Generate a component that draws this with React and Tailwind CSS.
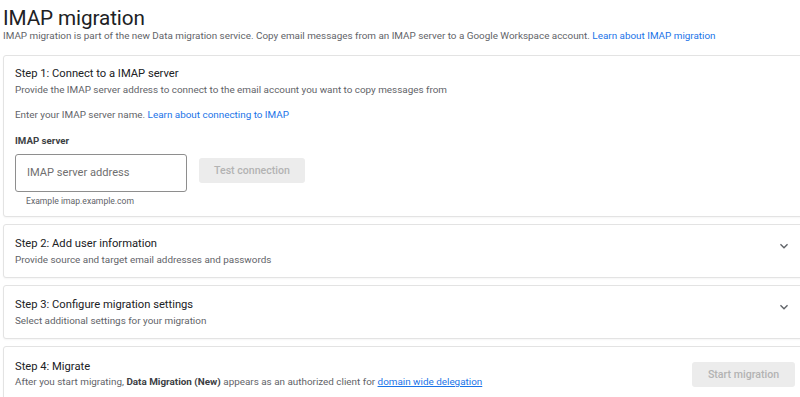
import React from "react";

function Chevron() {
  return (
    <svg width="16" height="16" viewBox="0 0 24 24" className="text-[#5f6368]">
      <path d="M7.41 8.59L12 13.17l4.59-4.58L18 10l-6 6-6-6 1.41-1.41z" fill="currentColor" />
    </svg>
  );
}

function Card({ className = "", children }) {
  return (
    <div className={"border border-[#e3e3e3] rounded-[3px] bg-white shadow-[0_1px_2px_rgba(0,0,0,0.04)] " + className}>
      {children}
    </div>
  );
}

export default function App() {
  return (
    <div className="w-[800px] h-[397px] overflow-hidden bg-white font-['Roboto',sans-serif] text-[#202124]">
      <div className="pl-[3px] w-[810px]">
        <h1 className="text-[20.7px] leading-[22px] pt-[7px] tracking-[-0.1px]">IMAP migration</h1>
        <p className="text-[9.9px] leading-[14px] text-[#5f6368]">
          IMAP migration is part of the new Data migration service. Copy email messages from an IMAP server to a Google Workspace account.{" "}
          <span className="text-[#1a73e8]">Learn about IMAP migration</span>
        </p>

        <div className="mt-[12px] flex flex-col gap-[7px]">
          <Card className="h-[162px] pl-[11px] pt-[10px]">
            <div className="text-[11.2px] leading-[16px]">Step 1: Connect to a IMAP server</div>
            <div className="text-[9.9px] leading-[14px] text-[#5f6368] mt-[1px]">
              Provide the IMAP server address to connect to the email account you want to copy messages from
            </div>
            <div className="text-[9.9px] leading-[14px] text-[#5f6368] mt-[11px]">
              Enter your IMAP server name. <span className="text-[#1a73e8]">Learn about connecting to IMAP</span>
            </div>
            <div className="text-[9.7px] leading-[14px] font-bold text-[#3c4043] mt-[12px]">IMAP server</div>
            <div className="flex items-start gap-[12px] mt-[6px]">
              <div className="w-[172px] h-[38px] border border-[#8e8e8e] rounded-[3px] flex items-center pl-[11px] text-[11.1px] text-[#6f6f6f]">
                IMAP server address
              </div>
              <div className="mt-[4px] w-[106px] h-[25px] rounded-[3px] bg-[#ececec] flex items-center justify-center text-[10.6px] font-medium text-[#b3b3b3]">
                Test connection
              </div>
            </div>
            <div className="text-[8.6px] leading-[12px] text-[#5f6368] pl-[11px] mt-[3px]">Example imap.example.com</div>
          </Card>

          <Card className="h-[54px] pl-[11px] pt-[11px] relative">
            <div className="text-[11.2px] leading-[16px]">Step 2: Add user information</div>
            <div className="text-[9.9px] leading-[14px] text-[#5f6368] mt-[1px]">
              Provide source and target email addresses and passwords
            </div>
            <div className="absolute left-[772px] top-[13px]"><Chevron /></div>
          </Card>

          <Card className="h-[54px] pl-[11px] pt-[11px] relative">
            <div className="text-[11.2px] leading-[16px]">Step 3: Configure migration settings</div>
            <div className="text-[9.9px] leading-[14px] text-[#5f6368] mt-[1px]">
              Select additional settings for your migration
            </div>
            <div className="absolute left-[772px] top-[13px]"><Chevron /></div>
          </Card>

          <Card className="h-[60px] pl-[11px] pt-[12px] relative">
            <div className="text-[11.2px] leading-[16px]">Step 4: Migrate</div>
            <div className="text-[9.9px] leading-[14px] text-[#5f6368]">
              After you start migrating, <span className="font-bold text-[#3c4043]">Data Migration (New)</span> appears as an authorized client for{" "}
              <span className="text-[#1a73e8] underline">domain wide delegation</span>
            </div>
            <div className="absolute left-[688px] top-[15px] w-[103px] h-[25px] rounded-[3px] bg-[#ececec] flex items-center justify-center text-[10.6px] font-medium text-[#b3b3b3]">
              Start migration
            </div>
          </Card>
        </div>
      </div>
    </div>
  );
}
